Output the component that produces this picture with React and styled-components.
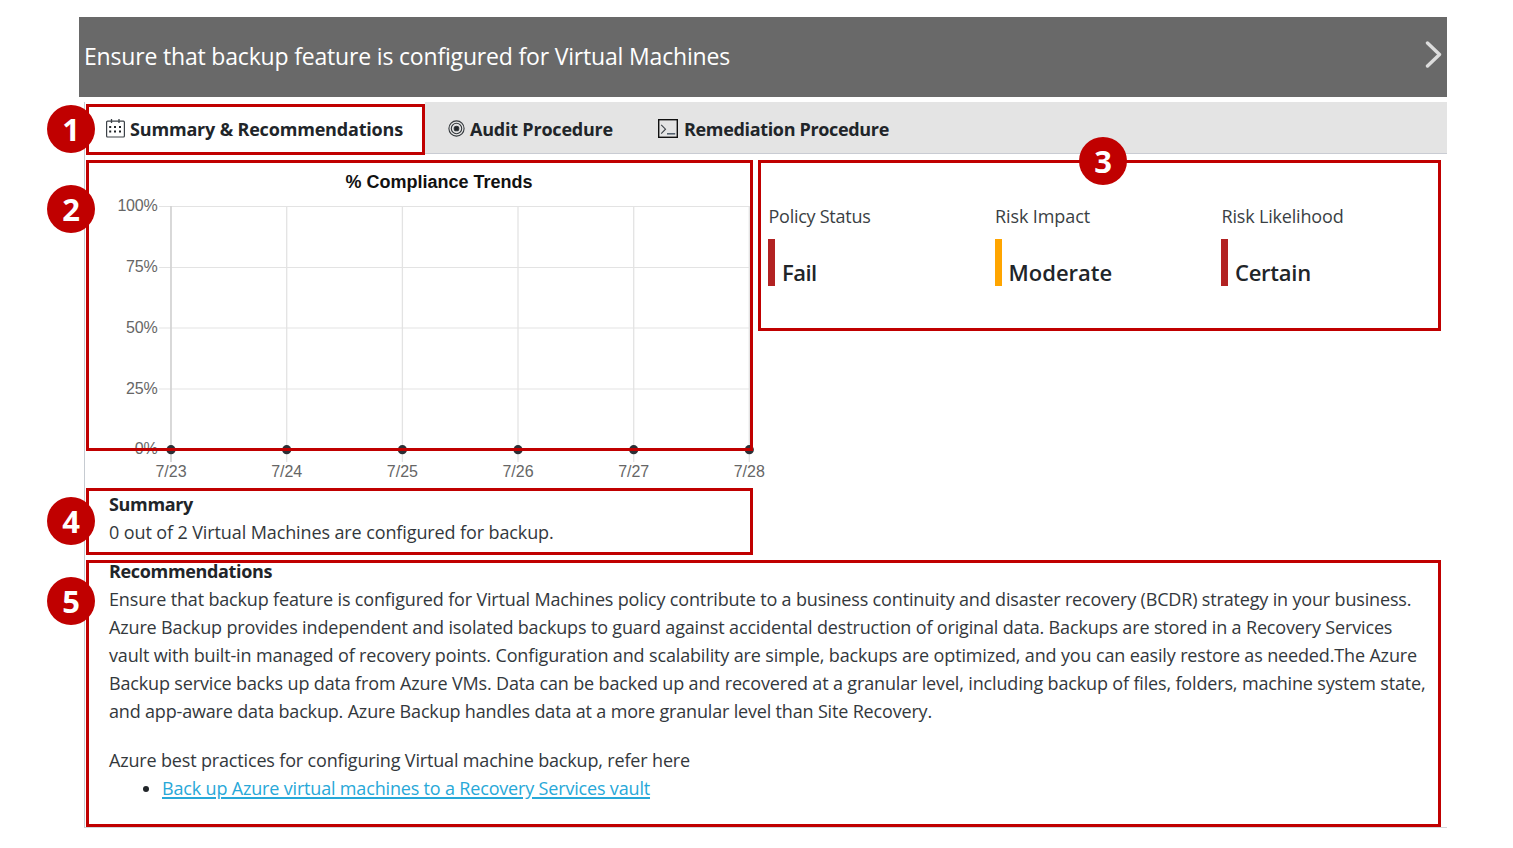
import React from "react";
import styled, { createGlobalStyle } from "styled-components";

const Global = createGlobalStyle`
  *, *::before, *::after { box-sizing: border-box; }
  body {
    margin: 0;
    background: #fff;
    color: #212529;
    font-family: "Open Sans", "Noto Sans", sans-serif;
    font-size: 18px;
    line-height: 28px;
  }
`;

const Page = styled.main`
  position: relative;
  width: 1513px;
  height: 848px;
  padding: 17px 66px 0 79px;
  overflow: hidden;
`;

const Header = styled.header`
  display: flex;
  align-items: center;
  justify-content: space-between;
  height: 80px;
  padding: 0 5px 2px;
  background: #696969;
  color: #fff;
`;

const Title = styled.h1`
  margin: 0;
  font-size: 23px;
  font-weight: 400;
  letter-spacing: -0.18px;
  white-space: nowrap;
`;

const Chevron = styled.svg`
  display: block;
  width: 18px;
  height: 28px;
  margin-bottom: 4px;
`;

const Panel = styled.section`
  display: flex;
  flex-direction: column;
  height: 726px;
  margin: 5px 0 0 5px;
  border-left: 1px solid #c6cbd1;
  border-bottom: 1px solid #d3d6da;
`;

const TabBar = styled.nav`
  display: flex;
  height: 52px;
  flex: none;
  background: #e4e4e4;
  border-bottom: 1px solid #c9ccd3;
`;

const Tab = styled.div`
  display: flex;
  align-items: center;
  gap: ${(p) => p.$gap}px;
  width: ${(p) => p.$width}px;
  height: 52px;
  padding: 1px 0 0 ${(p) => (p.$active ? 21 : 23)}px;
  background: ${(p) => (p.$active ? "#fff" : "transparent")};
  font-weight: 700;
  letter-spacing: ${(p) => p.$tracking}px;
  white-space: nowrap;

  svg { flex: none; display: block; margin-bottom: 1px; }
`;

const Overview = styled.div`
  display: grid;
  grid-template-columns: 673px 1fr;
  height: 336px;
  flex: none;
`;

const Chart = styled.svg`
  display: block;
  overflow: visible;
  font-family: "Liberation Sans", Arial, sans-serif;
  font-size: 16px;
`;

const Metrics = styled.div`
  display: grid;
  grid-template-columns: repeat(3, 226.5px);
  align-items: start;
  padding: 48px 0 0 10px;
`;

const Metric = styled.div`
  display: flex;
  flex-direction: column;
  gap: 9px;
`;

const MetricLabel = styled.div`
  color: #3a3f44;
  letter-spacing: ${(p) => p.$tracking}px;
  padding-left: 0.5px;
`;

const MetricValue = styled.div`
  height: 47px;
  padding: 19px 0 0 7px;
  border-left: 7px solid ${(p) => p.$color};
  font-size: 22px;
  font-weight: 600;
  letter-spacing: ${(p) => p.$tracking}px;
`;

const Copy = styled.div`
  display: flex;
  flex-direction: column;
  padding-left: 24px;
  color: #33383c;
`;

const Block = styled.section`
  margin-bottom: ${(p) => p.$after}px;
`;

const Heading = styled.h2`
  margin: 0;
  color: #212529;
  font-size: 18px;
  line-height: 28px;
  font-weight: 700;
  letter-spacing: -0.34px;
`;

const Line = styled.div`
  letter-spacing: ${(p) => p.$tracking ?? -0.16}px;
  white-space: nowrap;
`;

const Links = styled.ul`
  margin: 0;
  padding: 0 0 0 53px;
`;

const LinkItem = styled.li`
  letter-spacing: -0.173px;
  &::marker { color: #212529; }
`;

const Anchor = styled.a`
  color: #28a8d8;
  text-decoration: underline;
  text-decoration-thickness: 1.5px;
  text-underline-offset: 2px;
`;

const Frame = styled.div`
  position: absolute;
  left: ${(p) => p.$x}px;
  top: ${(p) => p.$y}px;
  width: ${(p) => p.$w}px;
  height: ${(p) => p.$h}px;
  border: 3px solid #c00000;
  pointer-events: none;
`;

const Badge = styled.div`
  position: absolute;
  left: ${(p) => p.$cx - 24}px;
  top: ${(p) => p.$cy - 24}px;
  width: 48px;
  height: 48px;
  border-radius: 50%;
  background: #c00000;
  color: #fff;
  font-size: 31px;
  font-weight: 700;
  line-height: 48px;
  text-align: center;
`;

const CalendarIcon = () => (
  <svg width="19" height="19" viewBox="0 0 19 19" fill="none" stroke="#3c4248">
    <rect x="0.6" y="2.2" width="17.8" height="15.8" rx="1" strokeWidth="1.2" />
    <path d="M5.5 0v4M13 0v4" strokeWidth="1.3" />
    <path
      d="M3.2 8h2M8 8h2M13 8h2M3.2 12.6h2M8 12.6h2M13 12.6h2"
      stroke="#212529"
      strokeWidth="2"
    />
  </svg>
);

const TargetIcon = () => (
  <svg width="17" height="17" viewBox="0 0 17 17" fill="none" stroke="#33383c" strokeWidth="1.1">
    <circle cx="8.5" cy="8.5" r="7.6" />
    <circle cx="8.5" cy="8.5" r="5.2" />
    <circle cx="8.5" cy="8.5" r="2.3" fill="#212529" />
  </svg>
);

const TerminalIcon = () => (
  <svg width="20" height="19" viewBox="0 0 20 19" fill="none">
    <rect x="0.7" y="0.7" width="18.6" height="17.6" stroke="#111" strokeWidth="1.4" />
    <path d="M3.2 5.8L7.5 10.2L3.2 14.6" stroke="#3c4248" strokeWidth="1.1" />
    <path d="M9 14.8h8.2" stroke="#4a5866" strokeWidth="1.5" />
  </svg>
);

const rows = [
  ["100%", 206.5],
  ["75%", 267.5],
  ["50%", 328],
  ["25%", 389],
  ["0%", 449.5],
];
const days = [
  ["7/23", 171],
  ["7/24", 286.7],
  ["7/25", 402.4],
  ["7/26", 518],
  ["7/27", 633.7],
  ["7/28", 749.3],
];

const ComplianceChart = () => (
  <Chart width="673" height="336" viewBox="85 154 673 336">
    {rows.map(([label, y]) => (
      <g key={label}>
        <line x1="159" x2="749" y1={y} y2={y} stroke="#e3e3e3" strokeWidth="1.2" />
        <text x="157.5" y={y + 4.8} textAnchor="end" fill="#666" letterSpacing="-0.2">{label}</text>
      </g>
    ))}
    {days.map(([label, x], i) => (
      <g key={label}>
        <line x1={x} x2={x} y1="206" y2="462" stroke={i ? "#e3e3e3" : "#d2d2d2"} strokeWidth={i ? 1.3 : 1.7} />
        <circle cx={x} cy="449.7" r="4.6" fill="#2b3036" />
        <text x={x} y="477" textAnchor="middle" fill="#666">{label}</text>
      </g>
    ))}
    <text x="439" y="187.5" textAnchor="middle" fontSize="18" fontWeight="700" fill="#111">
      % Compliance Trends
    </text>
  </Chart>
);

const metrics = [
  { label: "Policy Status", value: "Fail", color: "#b22222", lt: -0.26, vt: -0.5 },
  { label: "Risk Impact", value: "Moderate", color: "#ffa500", lt: -0.1, vt: 0 },
  { label: "Risk Likelihood", value: "Certain", color: "#b22222", lt: -0.18, vt: -0.25 },
];

const frames = [
  [86, 104, 339, 51],
  [86, 160, 667, 291],
  [758, 160, 683, 171],
  [86, 488, 667, 67],
  [86, 560, 1355, 267],
];
const badges = [
  [71, 129],
  [71, 209],
  [1103, 161],
  [71, 521],
  [71, 601],
];

export default function App() {
  return (
    <Page>
      <Global />
      <Header>
        <Title>Ensure that backup feature is configured for Virtual Machines</Title>
        <Chevron viewBox="0 0 18 28" fill="none">
          <path d="M3.5 3L15.5 14.5L3.5 26" stroke="#dcdcdc" strokeWidth="3.4" strokeLinecap="round" strokeLinejoin="round" />
        </Chevron>
      </Header>
      <Panel>
        <TabBar>
          <Tab $active $width={340} $gap={5} $tracking={-0.178}>
            <CalendarIcon />
            Summary &amp; Recommendations
          </Tab>
          <Tab $width={210} $gap={5} $tracking={-0.21}>
            <TargetIcon />
            Audit Procedure
          </Tab>
          <Tab $width={260} $gap={6} $tracking={-0.338}>
            <TerminalIcon />
            Remediation Procedure
          </Tab>
        </TabBar>
        <Overview>
          <ComplianceChart />
          <Metrics>
            {metrics.map((m) => (
              <Metric key={m.label}>
                <MetricLabel $tracking={m.lt}>{m.label}</MetricLabel>
                <MetricValue $color={m.color} $tracking={m.vt}>{m.value}</MetricValue>
              </Metric>
            ))}
          </Metrics>
        </Overview>
        <Copy>
          <Block $after={11}>
            <Heading>Summary</Heading>
            <Line $tracking={-0.11}>0 out of 2 Virtual Machines are configured for backup.</Line>
          </Block>
          <Block $after={21}>
            <Heading>Recommendations</Heading>
            <Line $tracking={-0.162}>Ensure that backup feature is configured for Virtual Machines policy contribute to a business continuity and disaster recovery (BCDR) strategy in your business.</Line>
            <Line $tracking={-0.156}>Azure Backup provides independent and isolated backups to guard against accidental destruction of original data. Backups are stored in a Recovery Services</Line>
            <Line $tracking={-0.149}>vault with built-in managed of recovery points. Configuration and scalability are simple, backups are optimized, and you can easily restore as needed.The Azure</Line>
            <Line $tracking={-0.155}>Backup service backs up data from Azure VMs. Data can be backed up and recovered at a granular level, including backup of files, folders, machine system state,</Line>
            <Line $tracking={-0.172}>and app-aware data backup. Azure Backup handles data at a more granular level than Site Recovery.</Line>
          </Block>
          <Block $after={0}>
            <Line $tracking={-0.165}>Azure best practices for configuring Virtual machine backup, refer here</Line>
            <Links>
              <LinkItem>
                <Anchor>Back up Azure virtual machines to a Recovery Services vault</Anchor>
              </LinkItem>
            </Links>
          </Block>
        </Copy>
      </Panel>
      {frames.map(([x, y, w, h]) => (
        <Frame key={`${x}-${y}`} $x={x} $y={y} $w={w} $h={h} />
      ))}
      {badges.map(([cx, cy], i) => (
        <Badge key={i} $cx={cx} $cy={cy}>{i + 1}</Badge>
      ))}
    </Page>
  );
}
